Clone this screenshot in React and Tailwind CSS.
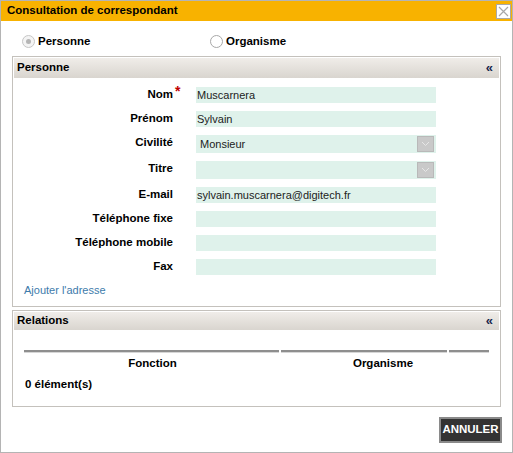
import React from "react";

const font = { fontFamily: '"Liberation Sans", Arial, sans-serif' };

function Field({ label, required, value, select }) {
  return (
    <div className="flex items-start">
      <div className="w-[159px] text-right font-bold text-[11.5px] leading-[14px] text-black">
        {label}
      </div>
      <div className="w-[23px] relative">
        {required && (
          <span className="absolute left-[2px] top-[-3px] text-[#c00000] text-[14px] leading-[14px] font-bold">
            *
          </span>
        )}
      </div>
      {select ? (
        <div className="w-[240px] h-[18px] bg-[#dff2eb] flex items-center relative">
          <span className="pl-[4px] text-[11px] text-[#222]">{value}</span>
          <div className="absolute right-[2px] top-[1px] w-[17px] h-[16px] bg-[#c9c9c9] border border-[#b9b9b9] flex items-center justify-center">
            <svg width="9" height="6" viewBox="0 0 9 6">
              <path d="M1 1 L4.5 4.5 L8 1" fill="none" stroke="#e6e6e6" strokeWidth="1" />
            </svg>
          </div>
        </div>
      ) : (
        <div className="w-[240px] h-[16px] bg-[#dff2eb] flex items-center">
          <span className="pl-[1px] text-[11px] text-[#222]">{value}</span>
        </div>
      )}
    </div>
  );
}

function Radio({ checked }) {
  return (
    <span
      className={
        "w-[13px] h-[13px] rounded-full border flex items-center justify-center " +
        (checked ? "border-[#c6c6c6] bg-[#f4f4f4]" : "border-[#a8a8a8] bg-white")
      }
    >
      {checked && <span className="w-[5px] h-[5px] rounded-full bg-[#b5b5b5]" />}
    </span>
  );
}

function PanelHeader({ title, h }) {
  return (
    <div
      className={
        "flex items-center justify-between bg-gradient-to-b from-[#f0ede9] to-[#d9d5cf] pl-[3px] pr-[6px] " +
        h
      }
    >
      <span className="font-bold text-[11.5px] text-black">{title}</span>
      <span className="font-bold text-[13px] leading-[14px] text-[#16244a]">«</span>
    </div>
  );
}

export default function App() {
  return (
    <div
      className="w-[513px] h-[453px] border border-[#b4b4b4] bg-white flex flex-col"
      style={font}
    >
      <div className="h-[20px] bg-[#f8b200] flex items-center pl-[6px] pr-[1px]">
        <span className="font-bold text-[11.5px] text-black">
          Consultation de correspondant
        </span>
        <div className="ml-auto w-[15px] h-[15px] bg-white border border-[#a9a9a9] flex items-center justify-center">
          <svg width="11" height="11" viewBox="0 0 11 11">
            <path d="M1 1 L10 10 M10 1 L1 10" stroke="#a8a8a8" strokeWidth="1.2" />
          </svg>
        </div>
      </div>

      <div className="h-[35px] pt-[13px] pl-[21px] flex items-start">
        <div className="w-[188px] flex items-center gap-[3px]">
          <Radio checked />
          <span className="font-bold text-[11.5px] leading-[14px] text-black">Personne</span>
        </div>
        <div className="flex items-center gap-[3px]">
          <Radio />
          <span className="font-bold text-[11.5px] leading-[14px] text-black">Organisme</span>
        </div>
      </div>

      <div className="mx-[11px] border border-[#c4c1bc] p-[1px]">
        <PanelHeader title="Personne" h="h-[20px]" />
        <div className="pt-[9px] flex flex-col gap-[8px]">
          <Field label="Nom" required value="Muscarnera" />
          <Field label="Prénom" value="Sylvain" />
          <Field label="Civilité" value="Monsieur" select />
          <Field label="Titre" value="" select />
          <Field label="E-mail" value="sylvain.muscarnera@digitech.fr" />
          <Field label="Téléphone fixe" value="" />
          <Field label="Téléphone mobile" value="" />
          <Field label="Fax" value="" />
        </div>
        <div className="mt-[8px] pb-[8px] pl-[10px] text-[11px] leading-[14px] text-[#3d7bab]">
          Ajouter l'adresse
        </div>
      </div>

      <div className="mx-[11px] mt-[3px] border border-[#c4c1bc] p-[1px]">
        <PanelHeader title="Relations" h="h-[18px]" />
        <div className="px-[10px] pt-[20px] pb-[14px]">
          <div className="flex gap-[2px]">
            <div className="w-[255px] h-[3px] border-t-2 border-b border-t-[#8e8e8e] border-b-[#d6d6d6]" />
            <div className="w-[166px] h-[3px] border-t-2 border-b border-t-[#8e8e8e] border-b-[#d6d6d6]" />
            <div className="flex-1 h-[3px] border-t-2 border-b border-t-[#8e8e8e] border-b-[#d6d6d6]" />
          </div>
          <div className="flex pt-[3px] font-bold text-[11.5px] leading-[14px] text-black">
            <div className="w-[257px] text-center">Fonction</div>
            <div className="w-[168px] pl-[36px] text-center">Organisme</div>
          </div>
          <div className="mt-[7px] pl-[1px] font-bold text-[11.5px] leading-[14px] text-black">
            0 élément(s)
          </div>
        </div>
      </div>

      <div className="flex justify-end mt-[10px] mr-[10px]">
        <button className="w-[63px] h-[26px] bg-[#333] border-2 border-[#8a8a8a] text-white font-bold text-[11.5px] flex items-center justify-center">
          ANNULER
        </button>
      </div>
    </div>
  );
}
